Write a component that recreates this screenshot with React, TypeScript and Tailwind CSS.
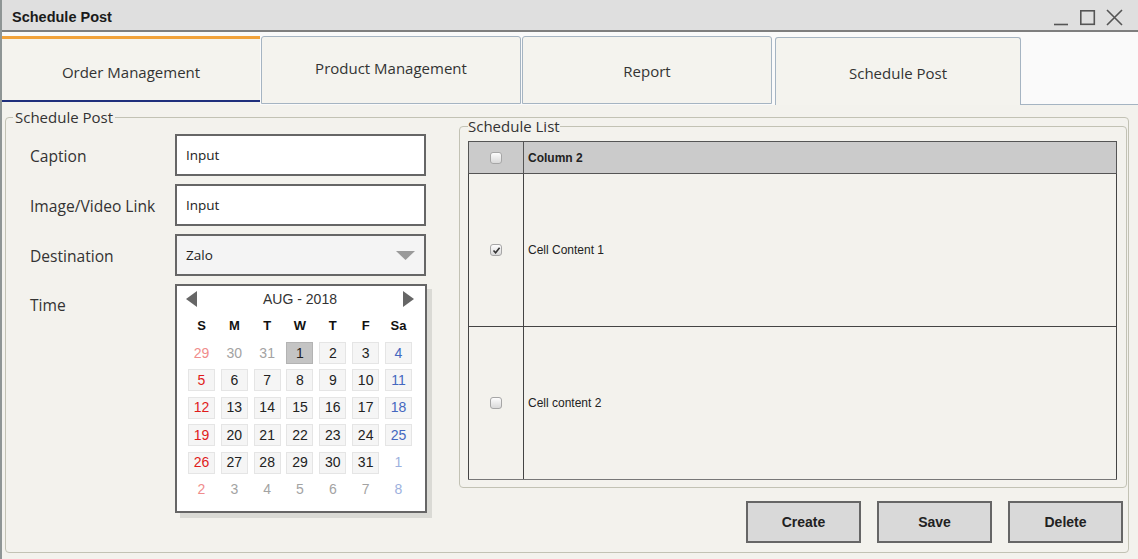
import React from "react";

type Day = { n: number; tone: "sun" | "sat" | "day"; out?: boolean; sel?: boolean };

const week = (nums: number[], outs: boolean[] = []): Day[] =>
  nums.map((n, i) => ({
    n,
    tone: i === 0 ? "sun" : i === 6 ? "sat" : "day",
    out: outs[i] || false,
  }));

const rows: Day[][] = [
  week([29, 30, 31, 1, 2, 3, 4], [true, true, true]),
  week([5, 6, 7, 8, 9, 10, 11]),
  week([12, 13, 14, 15, 16, 17, 18]),
  week([19, 20, 21, 22, 23, 24, 25]),
  week([26, 27, 28, 29, 30, 31, 1], [false, false, false, false, false, false, true]),
  week([2, 3, 4, 5, 6, 7, 8], [true, true, true, true, true, true, true]),
];
rows[0][3].sel = true;

const dayColor = (d: Day) => {
  if (d.out) {
    if (d.tone === "sun") return "text-[#f08c8c]";
    if (d.tone === "sat") return "text-[#9db1de]";
    return "text-[#a3a3a3]";
  }
  if (d.tone === "sun") return "text-[#e01b1b]";
  if (d.tone === "sat") return "text-[#4467bf]";
  return "text-[#222]";
};

const Checkbox = ({ checked }: { checked?: boolean }) => (
  <span className="flex h-[12px] w-[12px] items-center justify-center rounded-[3px] border border-[#a6a6a6] bg-linear-to-b from-[#fdfdfd] to-[#d9d9d9]">
    {checked && (
      <svg width="9" height="9" viewBox="0 0 9 9">
        <path d="M1.5 4.5 L3.6 6.8 L7.6 1.8" fill="none" stroke="#333" strokeWidth="1.6" />
      </svg>
    )}
  </span>
);

const Calendar = () => (
  <div className="h-[229px] w-[252px] border-2 border-[#666] bg-white shadow-[5px_5px_0_#dadad5] font-['Liberation_Sans',Arial,sans-serif]">
    <div className="mt-[3px] flex h-[20px] items-center justify-between pl-[9px] pr-[11px]">
      <svg width="11" height="16" viewBox="0 0 11 16">
        <path d="M11 0 L0 8 L11 16 Z" fill="#666" />
      </svg>
      <span className="text-[14px] text-[#333]">AUG - 2018</span>
      <svg width="11" height="16" viewBox="0 0 11 16">
        <path d="M0 0 L11 8 L0 16 Z" fill="#666" />
      </svg>
    </div>
    <div className="ml-[11px] mt-[8px] grid w-[224px] grid-cols-[repeat(7,27px)] justify-between">
      {["S", "M", "T", "W", "T", "F", "Sa"].map((h, i) => (
        <span key={i} className="text-center text-[13px] font-bold leading-[18px] text-[#111]">
          {h}
        </span>
      ))}
    </div>
    <div className="ml-[11px] mt-[7px] grid w-[224px] grid-cols-[repeat(7,27px)] justify-between gap-y-[5.4px]">
      {rows.flat().map((d, i) => (
        <span
          key={i}
          className={`flex h-[22px] items-center justify-center text-[14px] ${dayColor(d)} ${
            d.sel
              ? "border border-[#b3b3b3] bg-[#c4c4c4]"
              : d.out
              ? ""
              : "border border-[#e5e5e5] bg-[#f5f5f5]"
          }`}
        >
          {d.n}
        </span>
      ))}
    </div>
  </div>
);

const FieldRow = ({ label, children }: { label: string; children: React.ReactNode }) => (
  <div className="flex items-center">
    <span className="w-[145px] pt-[3px] text-[15.6px] text-[#333]">{label}</span>
    {children}
  </div>
);

export default function App() {
  return (
    <div className="flex h-[559px] w-[1138px] flex-col overflow-hidden border-l-2 border-[#8e9595] bg-[#f3f2ed] font-['Open_Sans','Noto_Sans',sans-serif]">
      {/* title bar */}
      <div className="flex h-[32px] shrink-0 items-center justify-between border-b-2 border-[#7e7e7e] bg-[#dfdfdf] pl-[10px] pr-[14px] pt-[5px]">
        <span className="font-['Liberation_Sans',Arial,sans-serif] text-[14.5px] font-bold text-[#1a1a1a]">
          Schedule Post
        </span>
        <svg width="72" height="18" viewBox="0 0 72 18">
          <path d="M2 15.5 H16" stroke="#555" strokeWidth="1.6" />
          <rect x="28.8" y="1.8" width="13.5" height="13.5" fill="none" stroke="#555" strokeWidth="1.6" />
          <path d="M55 1 L70 16 M70 1 L55 16" stroke="#555" strokeWidth="1.6" />
        </svg>
      </div>

      {/* tabs */}
      <div className="flex h-[73px] shrink-0 items-start bg-[#fafafa] pt-[4px] text-[15px] text-[#333]">
        <div className="h-[69px] w-[258px] bg-[#f3f2ed]">
          <div className="flex h-[66px] items-center justify-center border-t-[3px] border-b-2 border-t-[#f2a23a] border-b-[#1f2f7c] bg-[#f4f3ee] pt-[5px]">
            Order Management
          </div>
        </div>
        <div className="ml-px flex h-[68px] w-[260px] items-center justify-center rounded-t-[3px] border border-[#a5b4c2] bg-[#f4f3ee] pb-[3px]">
          Product Management
        </div>
        <div className="ml-px flex h-[68px] w-[250px] items-center justify-center rounded-t-[3px] border border-[#a5b4c2] bg-[#f4f3ee] pt-[2px]">
          Report
        </div>
        <div className="ml-[3px] mt-px flex h-[68px] w-[246px] items-center justify-center rounded-t-[3px] border-x border-t border-[#a5b4c2] bg-[#f4f3ee] pt-[3px]">
          Schedule Post
        </div>
        <div className="flex-1 self-stretch border-b border-[#a5b4c2]" />
      </div>

      {/* content */}
      <fieldset className="ml-[3px] mt-[3px] h-[445px] w-[1124px] rounded-[4px] border border-[#c2c2b4]">
        <legend className="ml-[7px] px-[2px] text-[15px] leading-[18px] text-[#333]">Schedule Post</legend>
        <div className="flex">
          <div className="flex w-[453px] flex-col gap-[8px] pl-[24px] pt-[8px]">
            <FieldRow label="Caption">
              <div className="flex h-[42px] w-[251px] items-center border-2 border-[#666] bg-white pl-[9px] text-[13.5px] text-[#222]">
                Input
              </div>
            </FieldRow>
            <FieldRow label="Image/Video Link">
              <div className="flex h-[42px] w-[251px] items-center border-2 border-[#666] bg-white pl-[9px] text-[13.5px] text-[#222]">
                Input
              </div>
            </FieldRow>
            <FieldRow label="Destination">
              <div className="flex h-[42px] w-[251px] items-center justify-between border-2 border-[#666] bg-[#f4f4f4] pl-[9px] pr-[9px] text-[13.5px] text-[#222]">
                Zalo
                <svg width="19" height="9" viewBox="0 0 19 9">
                  <path d="M0 0 H19 L9.5 9 Z" fill="#9a9a9a" />
                </svg>
              </div>
            </FieldRow>
            <div className="flex items-start">
              <span className="w-[145px] pt-[10px] text-[15.6px] text-[#333]">Time</span>
              <Calendar />
            </div>
          </div>

          <div className="flex flex-col">
            <fieldset className="-mt-[9px] h-[371px] w-[668px] rounded-[4px] border border-[#c2c2b4] px-[8px] pt-[6px]">
              <legend className="text-[15px] leading-[18px] text-[#333]">Schedule List</legend>
              <table className="w-[649px] border-collapse font-['Liberation_Sans',Arial,sans-serif] text-[12px] text-[#222]">
                <thead>
                  <tr className="h-[32px] bg-[#cbcbcb]">
                    <th className="w-[55px] border border-[#555]">
                      <span className="flex justify-center">
                        <Checkbox />
                      </span>
                    </th>
                    <th className="border border-[#555] pl-[4px] text-left font-bold">Column 2</th>
                  </tr>
                </thead>
                <tbody>
                  <tr className="h-[153px]">
                    <td className="border border-[#444]">
                      <span className="flex justify-center">
                        <Checkbox checked />
                      </span>
                    </td>
                    <td className="border border-[#444] pl-[4px]">Cell Content 1</td>
                  </tr>
                  <tr className="h-[153px]">
                    <td className="border border-[#444] border-b-[#777]">
                      <span className="flex justify-center">
                        <Checkbox />
                      </span>
                    </td>
                    <td className="border border-[#444] border-b-[#777] pl-[4px]">Cell content 2</td>
                  </tr>
                </tbody>
              </table>
            </fieldset>
            <div className="mr-[4px] mt-[13px] flex justify-end gap-[16px] font-['Liberation_Sans',Arial,sans-serif] text-[14px] font-bold text-[#222]">
              {["Create", "Save", "Delete"].map((b) => (
                <button
                  key={b}
                  className="h-[42px] w-[115px] border-2 border-[#666] bg-[#d9d9d9]"
                >
                  {b}
                </button>
              ))}
            </div>
          </div>
        </div>
      </fieldset>
    </div>
  );
}
